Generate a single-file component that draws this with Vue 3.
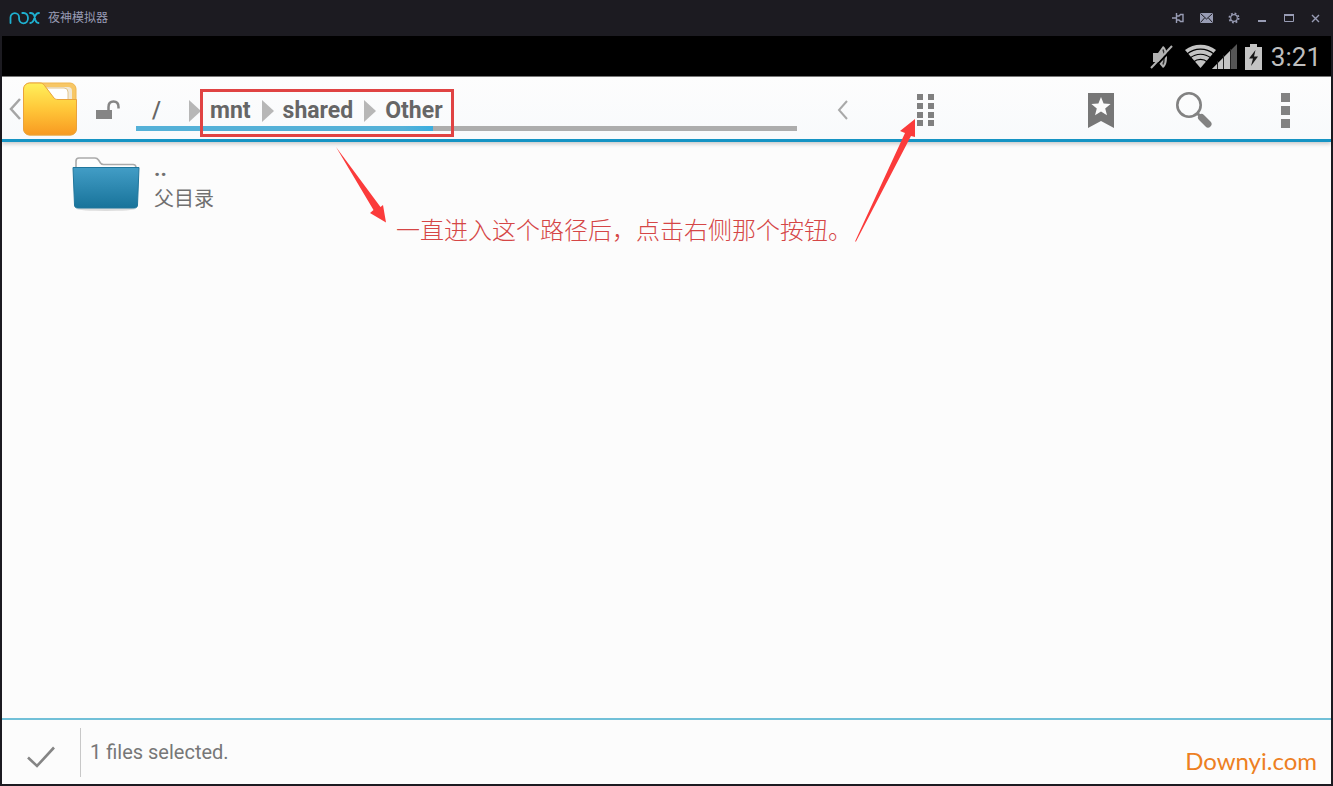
<script setup>
import { ref } from 'vue'

const path = ref(['mnt', 'shared', 'Other'])
const usedPercent = ref(45)
const selectedCount = ref(1)
</script>

<template>
  <div class="window">
    <header class="titlebar">
      <svg class="brand" width="32" height="14" viewBox="0 0 32 14" aria-hidden="true">
        <g fill="none" stroke="#1fb0d0" stroke-width="1.800" stroke-linecap="round">
          <path d="M1.500 12V6.500a4.300 4.300 0 0 1 8.600 0V8a4.500 4.500 0 0 0 4.500 4.300c2.500 0 4.400-2.200 4.400-5.200S17.200 2 14.800 2h-1.500" />
          <path d="M21 2h.5c2 0 3.200 1 3.800 2.800l1 4c.6 2 1.500 3.200 3.200 3.200M30 2c-2 0-3 1-3.800 2.800l-1.400 4c-.7 2-1.700 3.200-3.500 3.200" />
        </g>
      </svg>
      <h1 class="title">夜神模拟器</h1>
      <nav class="window-tools">
        <button class="wide" aria-label="置顶">
          <svg width="12" height="12" viewBox="0 0 12 12"><path d="M0 6h4M4.500 1v10M4.500 4H7l1.500-1.500H11v7H8.500L7 8H4.500" fill="none" stroke="#989cb4" stroke-width="1.400" /></svg>
        </button>
        <button class="wide" aria-label="消息">
          <svg width="13" height="10" viewBox="0 0 13 10"><path d="M0 0h13v10H0z" fill="#989cb4" /><path d="M.5.500l6 5.500 6-5.500M.5 9.500L4.500 5M12.500 9.500L8.500 5" fill="none" stroke="#1c1b21" stroke-width="1" /></svg>
        </button>
        <button class="wide" aria-label="设置">
          <svg width="12" height="12" viewBox="0 0 12 12"><circle cx="6" cy="6" r="4.600" fill="none" stroke="#989cb4" stroke-width="1.800" stroke-dasharray="1.800 1.813" /><circle cx="6" cy="6" r="3.300" fill="none" stroke="#989cb4" stroke-width="1.200" /></svg>
        </button>
        <button aria-label="最小化">
          <svg width="10" height="10" viewBox="0 0 10 10"><path d="M1 7h8v2H1z" fill="#989cb4" /></svg>
        </button>
        <button aria-label="最大化">
          <svg width="10" height="8" viewBox="0 0 10 8"><path d="M.5 1v6.500h9V1" fill="none" stroke="#989cb4" /><path d="M0 0h10v2H0z" fill="#989cb4" /></svg>
        </button>
        <button aria-label="关闭">
          <svg width="9" height="9" viewBox="0 0 9 9"><path d="M1 1l7 7M8 1L1 8" stroke="#989cb4" stroke-width="1.400" /></svg>
        </button>
      </nav>
    </header>

    <div class="statusbar">
      <svg width="24" height="28" viewBox="0 0 24 28" aria-hidden="true">
        <path d="M3 10h5l5-7c3 2 4 6 4 11s-1 9-4 11l-5-6H3z" fill="#b2b2b2" />
        <path d="M13 6.500c1.500 3 1.500 12 0 15" fill="none" stroke="#333" stroke-width="1.500" />
        <path d="M3 26L22 6" stroke="#000" stroke-width="2" />
        <path d="M1 25L22 3" stroke="#b2b2b2" stroke-width="2" />
      </svg>
      <svg class="signal" width="54" height="26" viewBox="0 0 54 26" aria-hidden="true">
        <path d="M1 6C10-1 23-1 32 6L16.500 24z" fill="#c4c4c4" />
        <g fill="none" stroke="#000" stroke-width="1.200">
          <path d="M3 10c8-6.500 19-6.500 27 0" />
          <path d="M6 14c6.500-5 14.500-5 21 0" />
          <path d="M9.500 18c4-3.500 10-3.500 14 0" />
        </g>
        <path d="M28 25L53 0v25z" fill="#555" />
        <path d="M28 25L46 7v18z" fill="#c4c4c4" />
        <path d="M33.500 17v8M39.500 11v14M46.500 5v20" stroke="#222" stroke-width="1" />
      </svg>
      <svg class="battery" width="17" height="26" viewBox="0 0 17 26" aria-hidden="true">
        <path d="M5 0h7v3h5v23H0V3h5z" fill="#c4c4c4" />
        <path d="M10.500 6L4 14.500h4L6 22l7-9.500H9z" fill="#181818" />
      </svg>
      <time class="clock">3:21</time>
    </div>

    <div class="toolbar">
      <button class="home" aria-label="返回">
        <svg width="14" height="24" viewBox="0 0 14 24"><path d="M12 2L3 12l9 10" fill="none" stroke="#a5a5a5" stroke-width="2.500" /></svg>
        <svg width="56" height="56" viewBox="0 0 56 56">
          <defs>
            <linearGradient id="folderFront" x1="0" y1="0" x2="0" y2="1">
              <stop offset="0" stop-color="#fff05b" />
              <stop offset=".5" stop-color="#ffc739" />
              <stop offset="1" stop-color="#f89a21" />
            </linearGradient>
          </defs>
          <rect x="2" y="2" width="52" height="52" rx="6" fill="#f7c766" stroke="#f1b64c" />
          <path d="M20 6h26a4 4 0 0 1 4 4v12H20z" fill="#f1e8d5" />
          <path d="M20 7h22a4 4 0 0 1 4 4v12H20z" fill="#fff" stroke="#e2c68e" />
          <path d="M1.500 8a6 6 0 0 1 6-6H18c2 0 3.500 1 4.500 2.500L32 17c1 1 2 1.500 4 1.500h18.500V48a6 6 0 0 1-6 6h-41a6 6 0 0 1-6-6z" fill="url(#folderFront)" stroke="#eaa33b" />
        </svg>
      </button>
      <button class="lock" aria-label="解锁">
        <svg width="26" height="22" viewBox="0 0 26 22"><path d="M1 11h16v9H1z" fill="#858585" /><path d="M13.500 11V8c0-3.500 2-5.500 5-5.500s5 2 5 5.500v1.500" fill="none" stroke="#858585" stroke-width="2.500" /></svg>
      </button>

      <nav class="breadcrumb" aria-label="路径">
        <div class="crumbs">
          <a class="root" href="#">/</a>
          <template v-for="name in path" :key="name">
            <svg class="sep" width="12" height="22" viewBox="0 0 12 22" aria-hidden="true"><path d="M0 0v22L12 11z" fill="#b7b7b7" /></svg>
            <a href="#">{{ name }}</a>
          </template>
        </div>
        <div class="usage"><div class="used" :style="{ width: usedPercent + '%' }"></div></div>
      </nav>

      <button class="action" aria-label="后退">
        <svg width="12" height="20" viewBox="0 0 12 20"><path d="M10 1L2 10l8 9" fill="none" stroke="#a9a9a9" stroke-width="2" /></svg>
      </button>
      <button class="action grid" aria-label="多选">
        <svg width="18" height="34" viewBox="0 0 18 34"><path d="M1 1h6v6H1zM12 1h6v6h-6zM1 10h6v6H1zM12 10h6v6h-6zM1 19h6v6H1zM12 19h6v6h-6zM1 27h6v6H1zM12 27h6v6h-6z" fill="#808080" /></svg>
      </button>
      <button class="action" aria-label="书签">
        <svg width="26" height="35" viewBox="0 0 26 35"><path d="M0 0h26v35l-13-7-13 7z" fill="#777" /><path d="M13 4l2.600 6.500 7 .5-5.400 4.500 1.800 6.800-6-3.800-6 3.800 1.800-6.800L3.400 11l7-.5z" fill="#fcfcfc" /></svg>
      </button>
      <button class="action" aria-label="搜索">
        <svg width="38" height="38" viewBox="0 0 38 38"><circle cx="15" cy="14" r="11.700" fill="none" stroke="#828282" stroke-width="2.600" /><path d="M23 22l4 4" stroke="#828282" stroke-width="3" /><path d="M27.500 26.500l6.500 6.500" stroke="#828282" stroke-width="7" stroke-linecap="round" /></svg>
      </button>
      <button class="action" aria-label="更多">
        <svg width="10" height="36" viewBox="0 0 10 36"><path d="M1 1h9v9H1zM1 14h9v9H1zM1 27h9v9H1z" fill="#828282" /></svg>
      </button>
    </div>

    <main class="files">
      <a class="row" href="#">
        <svg width="70" height="58" viewBox="0 0 70 58" aria-hidden="true">
          <defs>
            <linearGradient id="folderBlue" x1="0" y1="0" x2="0" y2="1">
              <stop offset="0" stop-color="#429dc6" />
              <stop offset="1" stop-color="#18739a" />
            </linearGradient>
          </defs>
          <ellipse cx="35" cy="54" rx="29" ry="2" fill="#ddd" />
          <path d="M5 16V6c0-2 1-3 3-3h16c1.500 0 2.500.5 3.500 2l2 3c.7 1 1.500 1.500 3 1.500H62c2 0 3 1 3 3V16" fill="#fefefe" stroke="#aaa" stroke-width="1.600" />
          <path d="M2 12.500h66L66.500 50c-.1 2-1.200 3-3 3h-57c-1.800 0-2.900-1-3-3z" fill="url(#folderBlue)" stroke="#20769c" />
        </svg>
        <span class="label"><b>..</b><span>父目录</span></span>
      </a>
    </main>

    <footer class="selection">
      <button class="confirm" aria-label="确定">
        <svg width="30" height="24" viewBox="0 0 30 24"><path d="M2 12.500l9 8.500L28 2.500" fill="none" stroke="#858585" stroke-width="2.600" /></svg>
      </button>
      <p class="count">{{ selectedCount }} files selected.</p>
      <span class="watermark">Downyi.com</span>
    </footer>

    <div class="guide">
      <svg width="940" height="250" viewBox="0 0 940 250" aria-hidden="true">
        <rect x="201.500" y="90.500" width="251" height="45" fill="none" stroke="#e04343" stroke-width="3" />
        <path d="M336 147L380.500 207l2.500-2 3 17.500-16-9.500 3.500-3z" fill="#fb3b3b" />
        <path d="M855 241.500L905 133l-5-2 15-12v18l-4-1-55 105.500z" fill="#fb3b3b" />
      </svg>
      <p class="hint">一直进入这个路径后，点击右侧那个按钮。</p>
    </div>
  </div>
</template>

<style>
body {
  margin: 0;
}
</style>

<style scoped>
.window {
  position: relative;
  box-sizing: border-box;
  display: flex;
  flex-direction: column;
  min-height: 100vh;
  padding: 0 2px 2px;
  background: #1c1b21;
  font-family: Roboto, "Noto Sans CJK SC", sans-serif;
}
button {
  display: flex;
  align-items: center;
  justify-content: center;
  margin: 0;
  padding: 0;
  border: 0;
  background: none;
  cursor: pointer;
}
svg {
  display: block;
  flex: none;
}
a {
  color: inherit;
  text-decoration: none;
}
.titlebar {
  display: flex;
  align-items: center;
  height: 36px;
  padding: 0 2px 0 7px;
}
.title {
  margin: 0 0 0 7px;
  color: #989cb4;
  font-size: 12px;
  font-weight: 400;
  line-height: 16px;
}
.window-tools {
  display: flex;
  margin-left: auto;
}
.window-tools button {
  width: 27px;
  height: 36px;
}
.window-tools .wide {
  width: 28px;
}
.statusbar {
  display: flex;
  align-items: center;
  justify-content: flex-end;
  box-sizing: border-box;
  height: 40px;
  padding: 1px 10px 0 0;
  background: #000;
}
.signal {
  margin-left: 10px;
}
.battery {
  margin-left: 7px;
}
.clock {
  margin-left: 9px;
  color: #bebebe;
  font-size: 26px;
  line-height: 40px;
}
.toolbar {
  display: flex;
  height: 62px;
  border-top: 1px solid #777;
  border-bottom: 3px solid #1594c4;
  background: linear-gradient(#fdfdfd, #f8fafc);
  box-shadow: 0 2px 4px #0003;
  z-index: 1;
}
.home {
  width: 74px;
  margin-left: 4px;
  padding-top: 2px;
}
.lock {
  width: 56px;
  padding-top: 4px;
}
.breadcrumb {
  display: flex;
  flex: 1;
  flex-direction: column;
  min-width: 0;
}
.crumbs {
  display: flex;
  align-items: center;
  box-sizing: border-box;
  height: 49px;
  padding-top: 18px;
  color: #666;
  font-size: 23px;
  font-weight: 700;
  line-height: 28px;
}
.root {
  box-sizing: border-box;
  width: 53px;
  padding-left: 16px;
  font-weight: 500;
}
.sep {
  margin-right: 9px;
}
.sep:not(:first-of-type) {
  margin-left: 11px;
}
.usage {
  height: 5px;
  background: #adadad;
}
.used {
  height: 100%;
  background: linear-gradient(90deg, #54b1d8 90%, #39aee0);
}
.action {
  width: 92px;
  padding-top: 4px;
}
.grid {
  width: 72px;
  margin-right: 94px;
}
.files {
  flex: 1;
  background: #fcfcfc;
}
.row {
  display: flex;
  align-items: flex-start;
  gap: 13px;
  padding: 13px 0 0 69px;
}
.label {
  display: flex;
  flex-direction: column;
  padding-top: 2px;
  color: #707070;
  font-size: 20px;
  line-height: 28px;
}
.label b {
  height: 28px;
  font-size: 22px;
  line-height: 24px;
}
.selection {
  display: flex;
  align-items: center;
  height: 64px;
  border-top: 2px solid #71c0d8;
  background: #fcfcfc;
}
.confirm {
  box-sizing: border-box;
  width: 79px;
  height: 49px;
  padding-top: 10px;
  border-right: 1px solid #c8c8c8;
}
.count {
  margin: 0 0 0 9px;
  color: #777;
  font-size: 20px;
  line-height: 24px;
}
.watermark {
  margin: 18px 14px 0 auto;
  color: #ed7f22;
  font-family: Lato, sans-serif;
  font-size: 24px;
  line-height: 28px;
}
.guide {
  position: absolute;
  top: 0;
  left: 0;
  z-index: 2;
  pointer-events: none;
}
.hint {
  position: absolute;
  top: 215px;
  left: 396px;
  margin: 0;
  color: #d54646;
  font-size: 24px;
  font-weight: 300;
  line-height: 32px;
  white-space: nowrap;
}
</style>
